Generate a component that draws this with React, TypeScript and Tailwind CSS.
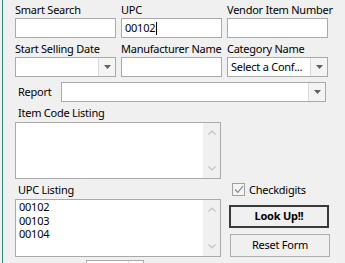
import React from "react";

function Caret() {
  return (
    <svg width="7" height="4" viewBox="0 0 7 4">
      <path d="M0 0h7L3.5 4z" fill="#606060" />
    </svg>
  );
}

function Combo({ value, width = "w-[101px]" }: { value?: string; width?: string }) {
  return (
    <div className={`flex h-[20px] ${width} border border-[#a9a9a9] bg-white`}>
      <div className="flex-1 truncate px-[3px] leading-[18px]">{value}</div>
      <div className="flex w-[17px] items-center justify-center border-l border-[#d9d9d9] bg-[#f4f4f4]">
        <Caret />
      </div>
    </div>
  );
}

function Field({ label, value, caret, cursor }: { label: string; value?: string; caret?: boolean; cursor?: boolean }) {
  return (
    <div className="flex flex-col">
      <div className="h-[16px] leading-[16px] whitespace-nowrap">{label}</div>
      {caret ? (
        <Combo value={value} />
      ) : (
        <div className="flex h-[20px] w-[101px] items-center border border-[#a9a9a9] bg-white px-[3px]">
          {value}
          {cursor && <span className="ml-px h-[13px] w-px bg-black" />}
        </div>
      )}
    </div>
  );
}

function Chevron({ up }: { up?: boolean }) {
  return (
    <svg width="8" height="5" viewBox="0 0 8 5">
      <path d={up ? "M0.5 4.5L4 1l3.5 3.5" : "M0.5 0.5L4 4l3.5-3.5"} fill="none" stroke="#c2c2c2" strokeWidth="1.2" />
    </svg>
  );
}

function ListBox({ items, h }: { items: string[]; h: string }) {
  return (
    <div className={`flex ${h} w-[206px] border border-[#a9a9a9] bg-white`}>
      <div className="flex-1 px-[3px] leading-[13.5px]">
        {items.map((i) => (
          <div key={i}>{i}</div>
        ))}
      </div>
      <div className="flex w-[17px] flex-col items-center justify-between bg-[#f0f0f0] py-[7px]">
        <Chevron up />
        <Chevron />
      </div>
    </div>
  );
}

export default function App() {
  return (
    <div
      className="relative h-[263px] w-[345px] overflow-hidden bg-[#f0f0f0] text-[11px] tracking-[-0.25px] text-black"
      style={{ fontFamily: '"Noto Sans", "Open Sans", sans-serif' }}
    >
      <div className="absolute left-[2px] top-0 h-full w-px bg-[#2a8a7a]" />
      <div className="pl-[15px] pt-[2px]">
        <div className="grid grid-cols-[101px_101px_101px] gap-x-[5px]">
          <Field label="Smart Search" value="" />
          <Field label="UPC" value="00102" cursor />
          <Field label="Vendor Item Number" value="" />
        </div>
        <div className="mt-[3px] grid grid-cols-[101px_101px_101px] gap-x-[5px]">
          <Field label="Start Selling Date" caret value="" />
          <Field label="Manufacturer Name" value="" />
          <Field label="Category Name" caret value="Select a Conf..." />
        </div>
        <div className="mt-[5px] flex items-center">
          <div className="w-[46px] pl-[3px]">Report</div>
          <Combo width="w-[265px]" />
        </div>
        <div className="mt-[2px] h-[18px] pl-[3px] leading-[18px]">Item Code Listing</div>
        <ListBox items={[]} h="h-[57px]" />
        <div className="flex">
          <div className="flex flex-col">
            <div className="mt-[2px] h-[18px] pl-[3px] leading-[18px]">UPC Listing</div>
            <ListBox items={["00102", "00103", "00104"]} h="h-[58px]" />
            <div className="ml-[71px] mt-[3px] flex h-[20px] w-[58px] border border-[#a9a9a9] bg-white">
              <div className="flex-1" />
              <div className="w-[15px] border-l border-[#d9d9d9]" />
            </div>
          </div>
          <div className="ml-[8px] flex flex-col pt-[3px]">
            <div className="ml-[3px] flex items-center gap-[4px]">
              <div className="flex h-[13px] w-[13px] items-center justify-center border border-[#a0a0a0] bg-[#f4f4f4]">
                <svg width="10" height="9" viewBox="0 0 10 9">
                  <path d="M1 4.5L3.8 7.3L9 1.2" fill="none" stroke="#8a8a8a" strokeWidth="1.2" />
                </svg>
              </div>
              <span className="leading-[15px]">Checkdigits</span>
            </div>
            <button className="mt-[8px] h-[23px] w-[100px] border-2 border-[#3a3a3a] bg-[#f0f0f0] font-bold">
              Look Up!!
            </button>
            <button className="ml-px mt-[6px] h-[23px] w-[100px] border border-[#adadad] bg-[#f0f0f0]">
              Reset Form
            </button>
          </div>
        </div>
      </div>
    </div>
  );
}
